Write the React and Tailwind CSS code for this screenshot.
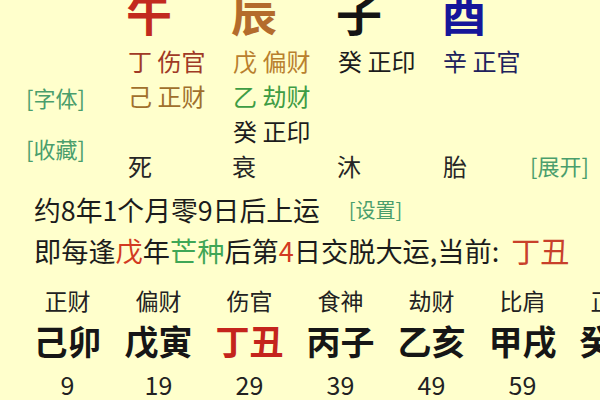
export default function App() {
  const font = "font-['Noto_Sans_CJK_SC','Noto_Sans',sans-serif]";
  const pillars = [
    { god: "正财", gz: "己卯", age: "9", cls: "text-[#161616]" },
    { god: "偏财", gz: "戊寅", age: "19", cls: "text-[#161616]" },
    { god: "伤官", gz: "丁丑", age: "29", cls: "text-[#c4241c]" },
    { god: "食神", gz: "丙子", age: "39", cls: "text-[#161616]" },
    { god: "劫财", gz: "乙亥", age: "49", cls: "text-[#161616]" },
    { god: "比肩", gz: "甲戌", age: "59", cls: "text-[#161616]" },
    { god: "正印", gz: "癸酉", age: "69", cls: "text-[#161616]" },
  ];
  return (
    <div className={`w-[600px] h-[400px] overflow-hidden bg-[#ffffcc] ${font} text-[#1c1c1c] flex flex-col`}>
      {/* big branches row */}
      <div className="h-[34px] flex items-end pl-[126px] overflow-visible">
        <div className="w-[105px] text-[46px] leading-[46px] font-bold text-[#c22a1e]">午</div>
        <div className="w-[105px] text-[46px] leading-[46px] font-semibold text-[#b46c2c]">辰</div>
        <div className="w-[105px] text-[46px] leading-[46px] font-semibold text-[#141414]">子</div>
        <div className="w-[105px] text-[46px] leading-[46px] font-bold text-[#16169a]">酉</div>
      </div>

      {/* hidden stems block */}
      <div className="mt-[9px] flex">
        <div className="w-[128px] pl-[26px] pt-[37px] flex flex-col text-[22px] text-[#4a9e6c]">
          <div className="h-[34px] leading-[34px]">[字体]</div>
          <div className="mt-[17px] h-[34px] leading-[34px]">[收藏]</div>
        </div>
        <div className="flex flex-col text-[24px]">
          <div className="h-[35px] leading-[35px] flex">
            <div className="w-[105px] text-[#a03a26]">丁 伤官</div>
            <div className="w-[105px] text-[#b9802e]">戊 偏财</div>
            <div className="w-[105px] text-[#1c1c1c]">癸 正印</div>
            <div className="w-[105px] text-[#20205c]">辛 正官</div>
          </div>
          <div className="h-[35px] leading-[35px] flex">
            <div className="w-[105px] text-[#a0702c]">己 正财</div>
            <div className="w-[105px] text-[#3e9c44]">乙 劫财</div>
          </div>
          <div className="h-[35px] leading-[35px] flex">
            <div className="w-[105px]"></div>
            <div className="w-[105px] text-[#1c1c1c]">癸 正印</div>
          </div>
          <div className="h-[35px] leading-[35px] flex text-[#262626]">
            <div className="w-[104px]">死</div>
            <div className="w-[105px]">衰</div>
            <div className="w-[106px]">沐</div>
            <div className="w-[87px]">胎</div>
            <div className="text-[22px] text-[#4a9e6c]">[展开]</div>
          </div>
        </div>
      </div>

      {/* start of luck */}
      <div className="mt-[7px] h-[40px] leading-[40px] pl-[34px] flex items-center whitespace-nowrap">
        <span className="text-[26.8px]">约8年1个月零9日后上运</span>
        <span className="ml-[29px] text-[20px] text-[#4a9e6c]">[设置]</span>
      </div>
      <div className="h-[40px] leading-[40px] pl-[34px] flex items-center whitespace-nowrap text-[27.2px]">
        <span>即每逢</span>
        <span className="text-[#d23a22]">戊</span>
        <span>年</span>
        <span className="text-[#3fa656]">芒种</span>
        <span>后第</span>
        <span className="text-[#d23a22]">4</span>
        <span>日交脱大运,当前:</span>
        <span className="ml-[12px] text-[29px] text-[#c8402a]">丁丑</span>
      </div>

      {/* luck pillars */}
      <div className="mt-[15px] flex pl-[22px] whitespace-nowrap">
        {pillars.map((p) => (
          <div key={p.gz} className="w-[91px] shrink-0 flex flex-col items-center">
            <div className="h-[30px] leading-[30px] text-[23px] text-[#222]">{p.god}</div>
            <div className={`mt-[6px] h-[40px] leading-[40px] text-[34px] font-bold ${p.cls}`}>{p.gz}</div>
            <div className="mt-[8px] h-[30px] leading-[30px] text-[25px] text-[#222]">{p.age}</div>
          </div>
        ))}
      </div>
    </div>
  );
}
